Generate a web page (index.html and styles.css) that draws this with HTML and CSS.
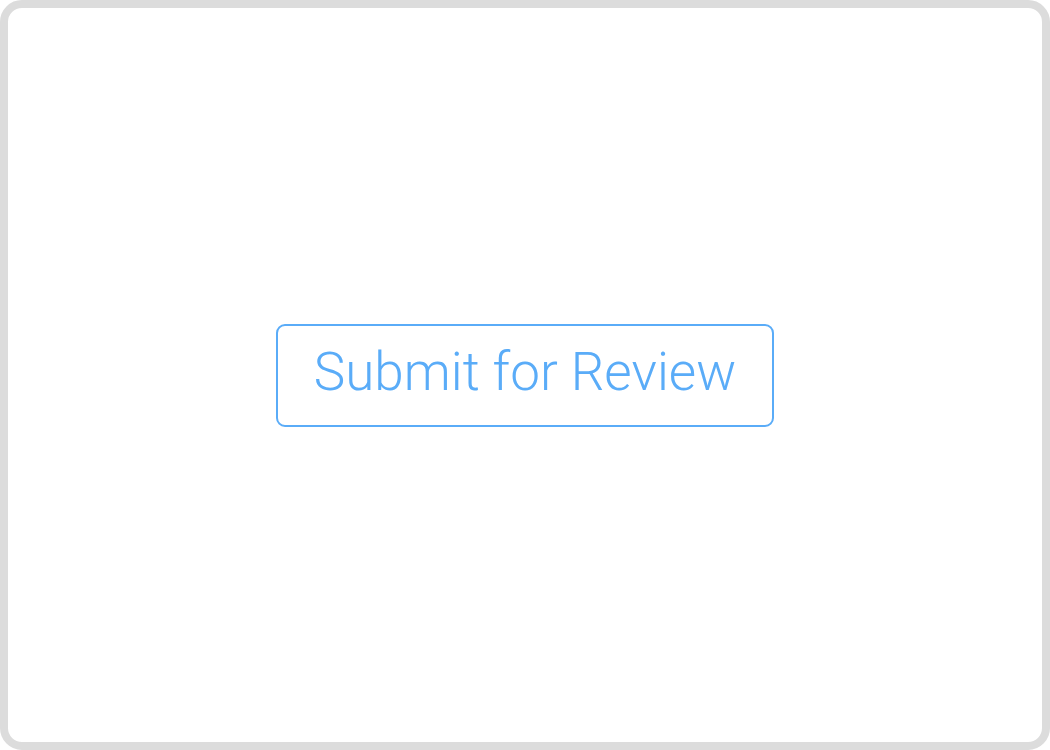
FILE: index.html
```html
<!DOCTYPE html>
<html>
<head>
<meta charset="utf-8">
<link rel="stylesheet" href="styles.css">
</head>
<body>
<div class="frame">
  <button class="submit">Submit for Review</button>
</div>
</body>
</html>
```

FILE: styles.css
```css
html, body {
  margin: 0;
  padding: 0;
  background: #ffffff;
}
.frame {
  box-sizing: border-box;
  width: 1050px;
  height: 750px;
  border: 8px solid #dcdcdc;
  border-radius: 22px;
  background: #ffffff;
  display: flex;
  align-items: center;
  justify-content: center;
}
.submit {
  box-sizing: border-box;
  width: 498px;
  height: 103px;
  margin-top: 1px;
  border: 2px solid #5aacf8;
  border-radius: 9px;
  background: #ffffff;
  color: #5aacf8;
  font-family: Roboto, "Liberation Sans", sans-serif;
  font-weight: 300;
  font-size: 53px;
  padding: 0 0 7px 0;
  display: flex;
  align-items: center;
  justify-content: center;
}
```
